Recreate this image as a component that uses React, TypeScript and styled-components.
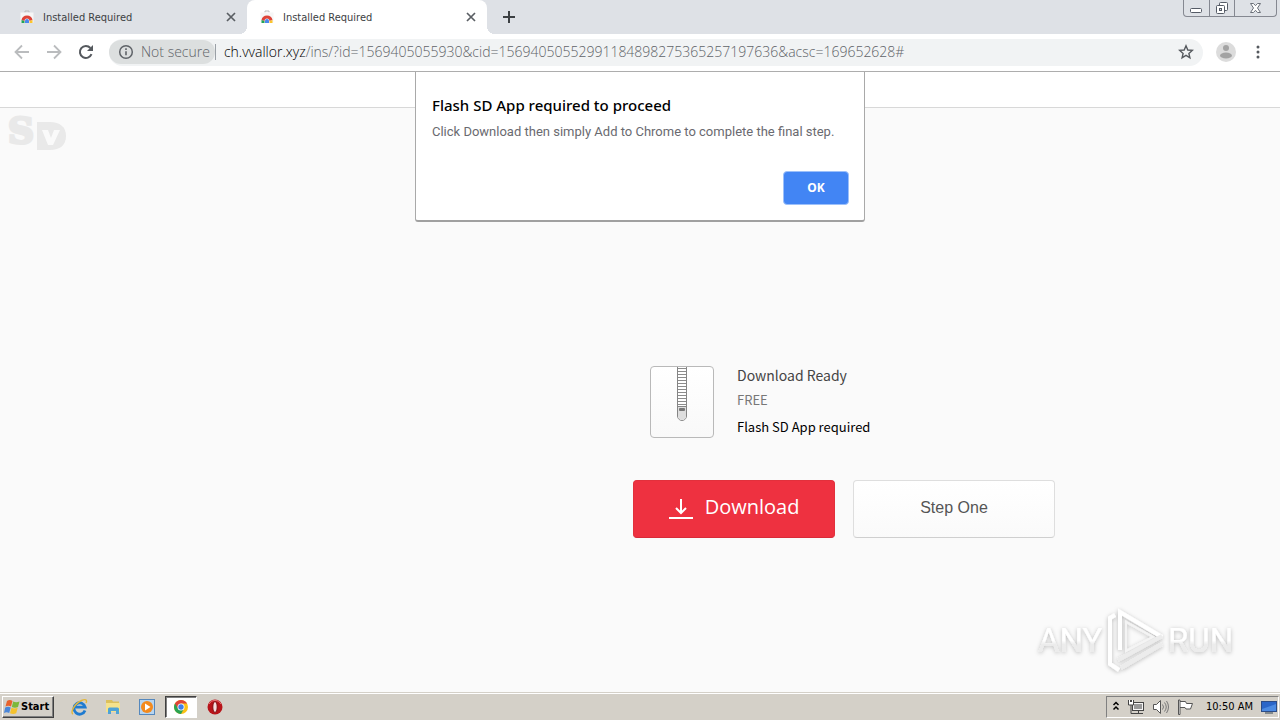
import React from "react";
import styled, { createGlobalStyle, css } from "styled-components";

const GlobalStyle = createGlobalStyle`
  *, *::before, *::after { box-sizing: border-box; }
  body {
    margin: 0;
    background: #fafafa;
    font-family: "Noto Sans", "Open Sans", sans-serif;
  }
  button, input { font: inherit; margin: 0; }
  p, h1, h2 { margin: 0; font-weight: 400; }
  svg { display: block; flex: none; }
`;

const Desktop = styled.div`
  display: flex;
  flex-direction: column;
  min-height: 100vh;
`;

const PlainButton = styled.button`
  display: flex;
  align-items: center;
  justify-content: center;
  flex: none;
  padding: 0;
  border: 0;
  background: none;
  color: #5f6368;
`;

/* ---------- tab strip ---------- */

const TabStrip = styled.header`
  display: flex;
  height: 34px;
  background: #dee1e6;
`;

const Tab = styled.div<{ $active?: boolean }>`
  position: relative;
  display: flex;
  align-items: center;
  gap: 8px;
  width: 240px;
  padding: 0 11px 0 12px;
  border-radius: 8px 8px 0 0;
  color: #3c4043;
  font: 11px/16px "DejaVu Sans Condensed", "DejaVu Sans", sans-serif;
  ${(p) =>
    p.$active &&
    css`
      background: #fff;
      &::before,
      &::after {
        content: "";
        position: absolute;
        bottom: 0;
        width: 8px;
        height: 8px;
      }
      &::before {
        right: 100%;
        background: radial-gradient(circle at 0 0, transparent 8px, #fff 8px);
      }
      &::after {
        left: 100%;
        background: radial-gradient(circle at 100% 0, transparent 8px, #fff 8px);
      }
    `}
`;

const Tabs = styled.div`
  display: flex;
  padding-left: 7px;
`;

const TabTitle = styled.span`
  flex: 1;
  padding-top: 2px;
  white-space: nowrap;
`;

const NewTab = styled(PlainButton)`
  width: 28px;
  margin-left: 8px;
  color: #3c4043;
`;

const WindowControls = styled.div`
  display: flex;
  height: 17px;
  margin: 0 3px 0 auto;
  border: 1px solid #858891;
  border-top: 0;
  border-radius: 0 0 4px 4px;
`;

const WindowButton = styled(PlainButton)<{ $wide?: boolean }>`
  width: ${(p) => (p.$wide ? 42 : 25)}px;
  & + & { border-left: 1px solid #858891; }
`;

/* ---------- toolbar ---------- */

const Toolbar = styled.div`
  display: flex;
  align-items: center;
  height: 38px;
  padding: 0 6px 1px 6px;
  background: #fff;
  border-bottom: 1px solid #adadad;
`;

const NavButton = styled(PlainButton)`
  width: 32px;
  height: 32px;
`;

const AddressBar = styled.form`
  display: flex;
  align-items: center;
  flex: 1;
  height: 27px;
  margin: 0 7px;
  padding-right: 9px;
  border-radius: 14px;
  background: #f1f3f4;
  font: 300 14px/20px "Open Sans", "Noto Sans", sans-serif;
`;

const SecurityChip = styled(PlainButton)`
  gap: 7px;
  height: 24px;
  padding: 0 5px 0 9px;
  border-radius: 12px;
  background: #dcdfdf;
`;

const UrlText = styled.div`
  flex: 1;
  margin-left: 8px;
  color: #5f6368;
  white-space: nowrap;
  overflow: hidden;
  b { color: #000; font-weight: 300; }
`;

const Separator = styled.span`
  width: 1px;
  height: 16px;
  background: #9aa0a6;
`;

/* ---------- web page ---------- */

const Page = styled.main`
  position: relative;
  flex: 1;
  display: flex;
  flex-direction: column;
  background: #fafafa;
`;

const PageHeader = styled.div`
  height: 36px;
  background: #fff;
  border-bottom: 1px solid #d8d8d8;
`;

const Brand = styled.div`
  padding: 0 6px;
`;

const Offer = styled.section`
  margin-top: 210px;
  padding: 0 16px 80px calc(50% - 7px);
`;

const Product = styled.div`
  display: flex;
  gap: 23px;
  padding-left: 17px;
`;

const ArchiveIcon = styled.div`
  display: flex;
  justify-content: center;
  width: 64px;
  height: 72px;
  border: 1px solid #b9b9b9;
  border-radius: 4px;
  background: linear-gradient(#fff, #f9f9f9);
`;

const ProductTitle = styled.h1`
  color: #444;
  font: 14px/18px "Noto Sans CJK SC", sans-serif;
`;

const ProductPrice = styled.p`
  margin-top: 6px;
  color: #777;
  font: 13px/20px "Noto Sans CJK SC", sans-serif;
`;

const ProductNote = styled.p`
  margin-top: 7px;
  color: #000;
  font: 13px/20px "Noto Sans CJK SC", sans-serif;
`;

const Actions = styled.div`
  display: flex;
  gap: 18px;
  margin-top: 42px;
`;

const ActionButton = styled.button<{ $primary?: boolean }>`
  display: flex;
  align-items: center;
  justify-content: center;
  gap: 12px;
  width: 202px;
  height: 58px;
  padding: 0 0 ${(p) => (p.$primary ? 4 : 2)}px;
  border: 1px solid ${(p) => (p.$primary ? "#e2303c" : "#dedede")};
  border-bottom-color: ${(p) => (p.$primary ? "#d82a38" : "#cfcfcf")};
  border-radius: 4px;
  background: ${(p) => (p.$primary ? "#ee3140" : "linear-gradient(#fff, #fafafa)")};
  color: ${(p) => (p.$primary ? "#fff" : "#555")};
  font: ${(p) =>
    p.$primary ? '20px/28px "Open Sans", sans-serif' : '16px/24px "Liberation Sans", sans-serif'};
`;

/* ---------- alert ---------- */

const Alert = styled.div`
  position: absolute;
  top: 0;
  left: 50%;
  transform: translateX(-50%);
  display: flex;
  flex-direction: column;
  width: 450px;
  padding: 21px 15px 15px 16px;
  border: 1px solid #a9a9a9;
  border-top: 0;
  border-bottom: 2px solid #a0a0a0;
  border-radius: 0 0 3px 3px;
  background: #fff;
`;

const AlertTitle = styled.h2`
  color: #000;
  font: 500 15px/24px "Noto Sans", sans-serif;
  white-space: nowrap;
`;

const AlertText = styled.p`
  margin-top: 5px;
  color: #6a6a70;
  font: 13px/20px Roboto, sans-serif;
  white-space: nowrap;
`;

const AlertOk = styled.button`
  align-self: flex-end;
  width: 66px;
  height: 34px;
  margin-top: 29px;
  border: 1px solid #9cc0fa;
  border-radius: 4px;
  background: #4285f4;
  color: #fff;
  font: 700 12px/16px "Noto Sans", sans-serif;
`;

const Watermark = styled.div`
  position: absolute;
  right: 44px;
  bottom: 16px;
`;

/* ---------- taskbar ---------- */

const Taskbar = styled.footer`
  display: flex;
  align-items: center;
  height: 28px;
  padding: 0 1px 0 2px;
  border-top: 1px solid #d4d0c8;
  background: #d4d0c8;
  box-shadow: inset 0 1px #fff;
`;

const StartButton = styled.button`
  display: flex;
  align-items: center;
  height: 22px;
  padding: 0 4px 0 1px;
  border: 1px solid;
  border-color: #fff #404040 #404040 #fff;
  box-shadow: inset -1px -1px #808080;
  background: #d4d0c8;
  color: #000;
  font: 700 11px/16px "DejaVu Sans Condensed", "DejaVu Sans", sans-serif;
`;

const Launcher = styled.nav`
  display: flex;
  gap: 2px;
  margin-left: 9px;
`;

const TaskButton = styled(PlainButton)<{ $pressed?: boolean }>`
  width: 32px;
  height: 22px;
  border: 1px solid transparent;
  ${(p) =>
    p.$pressed &&
    css`
      background: #fff;
      border-color: #404040 #fff #fff #404040;
      box-shadow: inset 1px 1px #808080;
    `}
`;

const Tray = styled.div`
  display: flex;
  align-items: center;
  height: 22px;
  margin-left: auto;
  padding: 0 1px 0 5px;
  border: 1px solid;
  border-color: #808080 #fff #fff #808080;
  gap: 8px;
  color: #000;
  font: 11px/16px "DejaVu Sans Condensed", "DejaVu Sans", sans-serif;
`;

const Clock = styled.time`
  margin: 0 0 0 5px;
  white-space: nowrap;
`;

/* ---------- drawings ---------- */

const StoreIcon = () => (
  <svg width="16" height="16" viewBox="0 0 16 16" aria-hidden="true">
    <path d="M6 3.500V2h4v1.500" fill="none" stroke="#bbb" />
    <path d="M1.500 3.500h13v9.500a1 1 0 0 1-1 1H2.500a1 1 0 0 1-1-1z" fill="#f6f6f6" />
    <path d="M2.500 11a5.600 5.600 0 0 1 11 0l-3 1a2.500 2.500 0 0 0-5 0z" fill="#dd4338" />
    <path d="M2.500 14V11l3 1v2z" fill="#23a455" />
    <path d="M10.500 14v-2l3-1V14z" fill="#fbc52d" />
    <path d="M6 14v-2a2 2 0 0 1 4 0v2z" fill="#4a87ee" />
  </svg>
);

const CloseIcon = () => (
  <svg width="10" height="10" viewBox="0 0 10 10" aria-hidden="true">
    <path d="M1 1l8 8M9 1L1 9" stroke="#5a5e63" strokeWidth="1.700" />
  </svg>
);

const ArrowIcon = ({ forward }: { forward?: boolean }) => (
  <svg width="16" height="16" viewBox="0 0 16 16" aria-hidden="true">
    <path
      d={forward ? "M1 8h13M8 1.500L14.500 8L8 14.500" : "M15 8h-13M8 1.500L1.500 8L8 14.500"}
      fill="none"
      stroke="#babcbe"
      strokeWidth="1.800"
    />
  </svg>
);

const ReloadIcon = () => (
  <svg width="16" height="16" viewBox="0 0 16 16" aria-hidden="true">
    <path d="M13.500 10.200A6 6 0 1 1 12.400 4" fill="none" stroke="#55595e" strokeWidth="2" />
    <path d="M15 1v6H9z" fill="#55595e" />
  </svg>
);

const InfoIcon = () => (
  <svg width="16" height="16" viewBox="0 0 16 16" aria-hidden="true">
    <circle cx="8" cy="8" r="6.300" fill="none" stroke="#5f6368" strokeWidth="1.500" />
    <path d="M8 7.200v4M8 4.300v1.600" stroke="#5f6368" strokeWidth="1.600" />
  </svg>
);

const StarIcon = () => (
  <svg width="16" height="16" viewBox="0 0 16 16" aria-hidden="true">
    <path
      d="M8 1.800l1.800 4.200 4.500.4-3.400 3 1 4.400L8 11.400l-3.900 2.400 1-4.400-3.400-3 4.500-.4z"
      fill="none"
      stroke="#55595e"
      strokeWidth="1.400"
    />
  </svg>
);

const AvatarIcon = () => (
  <svg width="20" height="20" viewBox="0 0 20 20" aria-hidden="true">
    <circle cx="10" cy="10" r="10" fill="#dcdcdc" />
    <circle cx="10" cy="6" r="3" fill="#a3a3a3" />
    <ellipse cx="10" cy="13.500" rx="6" ry="3" fill="#a3a3a3" />
  </svg>
);

const MenuIcon = () => (
  <svg width="4" height="16" viewBox="0 0 4 16" aria-hidden="true">
    {[3, 8, 13].map((y) => (
      <circle key={y} cx="2" cy={y} r="1.500" fill="#55595e" />
    ))}
  </svg>
);

const BrandLogo = () => (
  <svg width="62" height="48" viewBox="0 0 62 48" role="img" aria-label="SD">
    <text
      x="2"
      y="35"
      fill="#e9e9e9"
      stroke="#e9e9e9"
      strokeWidth="3"
      fontFamily="DejaVu Serif"
      fontWeight="700"
      fontSize="36"
    >
      S
    </text>
    <path d="M31 14h13c10 0 16 5 16 14s-6 14-16 14H31z" fill="#e9e9e9" />
    <path d="M36 22h6l3 8 3-8h6l-7 15h-5z" fill="#fafafa" />
  </svg>
);

const Zipper = () => (
  <svg width="12" height="56" viewBox="0 0 12 56" aria-hidden="true">
    <path d="M1.500 0v49a4.500 4.500 0 0 0 9 0V0" fill="#fff" stroke="#858585" />
    {Array.from({ length: 13 }, (_, i) => (
      <path key={i} d={`M2 ${i * 3 + 1.5}h8`} stroke="#8c8c8c" />
    ))}
    <path d="M2 39h8v10a4 4 0 0 1-8 0z" fill="#dedede" />
    <path d="M2 39.500h8" stroke="#858585" />
    <rect x="3" y="41" width="6" height="3" rx="1" fill="#777" />
  </svg>
);

const DownloadIcon = () => (
  <svg width="24" height="24" viewBox="0 0 24 24" aria-hidden="true">
    <path d="M12 4v14M7 13l5 5 5-5M0 23h24" fill="none" stroke="#fff" strokeWidth="2" />
  </svg>
);

const WatermarkLogo = () => (
  <svg width="202" height="70" viewBox="0 0 202 70" role="img" aria-label="ANY RUN">
    <defs>
      <linearGradient id="wm" x1="0" y1="0" x2="0" y2="1">
        <stop offset="0.500" stopColor="#fff" />
        <stop offset="0.600" stopColor="#ececec" />
      </linearGradient>
      <filter id="wmShadow" x="-10%" y="-10%" width="120%" height="120%">
        <feDropShadow dx="0" dy="1" stdDeviation="2" floodColor="#000" floodOpacity="0.280" />
      </filter>
    </defs>
    <g filter="url(#wmShadow)" fill="url(#wm)" fontFamily="Roboto, sans-serif" fontSize="33">
      <text x="4" y="46">ANY</text>
      <text x="134" y="46">RUN</text>
      <g fill="none" stroke="#fff" strokeWidth="4">
        <path d="M81 9l-5 3v46l9 6" />
        <path d="M86 44V6l42 25" />
        <path d="M84 54l44-24M87 62l41-24" stroke="#ececec" />
        <path d="M92 16v29l27-14z" stroke="#f4f4f4" strokeWidth="2" />
      </g>
    </g>
  </svg>
);

const WindowsFlag = () => (
  <svg width="17" height="16" viewBox="0 0 17 16" aria-hidden="true">
    <path d="M3 2c2-1.500 4-1 5.500 0L7 7.500C5.500 6.500 3.500 6.300 1.500 7.500z" fill="#e8622c" />
    <path d="M9.200 2.400c2 1 4 1 6.300 0L14 8c-2 1-4 1-6.200 0z" fill="#7cb83a" />
    <path d="M1.200 8.500c2-1.200 4-1 5.500 0L5.200 14c-1.500-1-3.500-1.200-5.200 0z" fill="#4a86d8" />
    <path d="M7.500 8.800c2 1 4 1 6.200 0l-1.500 5.500c-2 1-4 1-6.200 0z" fill="#f5c22c" />
  </svg>
);

const ExplorerIcon = () => (
  <svg width="18" height="18" viewBox="0 0 18 18" aria-hidden="true">
    <path d="M15 12.500A5.700 5.700 0 1 1 15.200 9.200H5.500" fill="none" stroke="#1f7bd0" strokeWidth="2.800" />
    <path d="M3 16C0 15 4 6 11.500 2.500c4-1.800 6-.6 4.500 2.500" fill="none" stroke="#e3b63a" strokeWidth="1.400" />
  </svg>
);

const FolderIcon = () => (
  <svg width="18" height="18" viewBox="0 0 18 18" aria-hidden="true">
    <path d="M2 2h6l1 1.500h6V14H2z" fill="#dcc05c" />
    <path d="M2 5h14v9H2z" fill="#f5e28c" />
    <path d="M4 16v-5q0-1.500 1.500-1.500h8q1.500 0 1.500 1.500v5h-3v-3H7v3z" fill="#4fa3d6" />
  </svg>
);

const PlayerIcon = () => (
  <svg width="18" height="18" viewBox="0 0 18 18" aria-hidden="true">
    <rect x="1.500" y="1.500" width="15" height="15" fill="#b7d5f0" stroke="#5588bd" />
    <circle cx="9" cy="9" r="6" fill="#f38a1d" />
    <path d="M7 5.500v7L12.500 9z" fill="#fff" />
  </svg>
);

const ChromeIcon = () => (
  <svg width="16" height="16" viewBox="0 0 16 16" aria-hidden="true">
    <circle cx="8" cy="8" r="7" fill="#fbc116" />
    <path d="M8 8L1.940 4.500A7 7 0 0 0 8 15l2.500-4.500z" fill="#2aa352" />
    <path d="M1.940 4.500a7 7 0 0 1 12.120 0H8L5 9.500z" fill="#df4437" />
    <circle cx="8" cy="8" r="3.500" fill="#fff" />
    <circle cx="8" cy="8" r="2.700" fill="#3f7fe8" />
  </svg>
);

const OperaIcon = () => (
  <svg width="16" height="16" viewBox="0 0 16 16" aria-hidden="true">
    <circle cx="8" cy="8" r="7.500" fill="#b8141a" />
    <path d="M2 5a6.700 6.700 0 0 1 12 0" fill="none" stroke="#e8787a" />
    <ellipse cx="8" cy="8" rx="2.200" ry="5.500" fill="#f6dede" stroke="#7f0c10" />
  </svg>
);

const ChevronsIcon = () => (
  <svg width="8" height="12" viewBox="0 0 8 12" aria-hidden="true">
    <path d="M1.500 4L4 1.500 6.500 4M1.500 8.500L4 6l2.500 2.500" fill="none" stroke="#000" strokeWidth="1.500" />
  </svg>
);

const NetworkIcon = () => (
  <svg width="16" height="16" viewBox="0 0 16 16" aria-hidden="true">
    <rect x="4.500" y="3.500" width="11" height="8" fill="#999" stroke="#444" />
    <rect x="5.500" y="4.500" width="9" height="6" fill="none" stroke="#f4f4f4" />
    <path d="M6 14.500h9M10.500 12v2" stroke="#444" />
    <path d="M3 6v8.500h4" fill="none" stroke="#444" />
    <path d="M0.500 1v5h5V1M2.500 1v2M3.500 1v2" fill="#fff" stroke="#444" />
  </svg>
);

const SpeakerIcon = () => (
  <svg width="17" height="16" viewBox="0 0 17 16" aria-hidden="true">
    <path d="M1.500 5.500h3l4-4v13l-4-4h-3z" fill="#fff" stroke="#555" />
    <path d="M10.500 5.500q2 2.500 0 5M12.500 3.500q3.500 4.500 0 9M14.500 2q4 6 0 12" fill="none" stroke="#777" />
  </svg>
);

const FlagIcon = () => (
  <svg width="16" height="16" viewBox="0 0 16 16" aria-hidden="true">
    <path d="M2.500 2.500h6l1 2h6l-2 5.500h-4.500l-1-1.500h-5.500" fill="#fff" stroke="#555" />
    <path d="M1.500 1v14.500h1.500V1z" fill="#fff" stroke="#555" />
  </svg>
);

const DesktopIcon = () => (
  <svg width="16" height="14" viewBox="0 0 16 14" aria-hidden="true">
    <rect x="0.500" y="1.500" width="15" height="10" fill="#2b66c8" stroke="#2c4c86" />
    <path d="M1 9L15 4v7H1z" fill="#4c8be2" />
    <path d="M4 13h8" stroke="#345" />
  </svg>
);

const MinimizeGlyph = () => (
  <svg width="13" height="14" viewBox="0 0 13 14" aria-hidden="true">
    <rect x="0.500" y="7.500" width="11" height="4" rx="1" fill="#fff" stroke="#555b66" />
  </svg>
);

const RestoreGlyph = () => (
  <svg width="14" height="14" viewBox="0 0 14 14" aria-hidden="true">
    <rect x="4.500" y="1.500" width="8" height="8" rx="1" fill="#fff" stroke="#555b66" />
    <rect x="1.500" y="4.500" width="8" height="8" rx="1" fill="#fff" stroke="#555b66" />
    <rect x="4.500" y="7.500" width="2" height="2" fill="#dee1e6" stroke="#555b66" />
  </svg>
);

const CloseGlyph = () => (
  <svg width="13" height="12" viewBox="0 0 13 12" aria-hidden="true">
    <path
      d="M1.500 1.500h3l2 2.200 2-2.200h3L8.500 6l3 4.500h-3l-2-2.200-2 2.200h-3L4.500 6z"
      fill="#fff"
      stroke="#6b7079"
    />
  </svg>
);

const tabs = [
  { title: "Installed Required", active: false },
  { title: "Installed Required", active: true },
];

const launchers = [
  { label: "Internet Explorer", Icon: ExplorerIcon },
  { label: "Windows Explorer", Icon: FolderIcon },
  { label: "Media Player", Icon: PlayerIcon },
  { label: "Google Chrome", Icon: ChromeIcon, pressed: true },
  { label: "Opera", Icon: OperaIcon },
];

export default function App() {
  return (
    <Desktop>
      <GlobalStyle />
      <TabStrip>
        <Tabs>
          {tabs.map((tab, i) => (
            <Tab key={i} $active={tab.active}>
              <StoreIcon />
              <TabTitle>{tab.title}</TabTitle>
              <PlainButton aria-label="Close tab">
                <CloseIcon />
              </PlainButton>
            </Tab>
          ))}
        </Tabs>
        <NewTab aria-label="New tab">
          <svg width="12" height="12" viewBox="0 0 12 12" aria-hidden="true">
            <path d="M6 0v12M0 6h12" stroke="#3c4043" strokeWidth="2" />
          </svg>
        </NewTab>
        <WindowControls>
          <WindowButton aria-label="Minimize"><MinimizeGlyph /></WindowButton>
          <WindowButton aria-label="Restore"><RestoreGlyph /></WindowButton>
          <WindowButton aria-label="Close" $wide><CloseGlyph /></WindowButton>
        </WindowControls>
      </TabStrip>

      <Toolbar>
        <NavButton aria-label="Back"><ArrowIcon /></NavButton>
        <NavButton aria-label="Forward"><ArrowIcon forward /></NavButton>
        <NavButton aria-label="Reload"><ReloadIcon /></NavButton>
        <AddressBar onSubmit={(e) => e.preventDefault()}>
          <SecurityChip type="button">
            <InfoIcon />
            Not secure
          </SecurityChip>
          <Separator />
          <UrlText>
            <b>ch.vvallor.xyz</b>
            /ins/?id=1569405055930&amp;cid=15694050552991184898275365257197636&amp;acsc=169652628#
          </UrlText>
          <PlainButton type="button" aria-label="Bookmark this page"><StarIcon /></PlainButton>
        </AddressBar>
        <NavButton aria-label="Profile"><AvatarIcon /></NavButton>
        <NavButton aria-label="Menu"><MenuIcon /></NavButton>
      </Toolbar>

      <Page>
        <PageHeader />
        <Brand><BrandLogo /></Brand>
        <Offer>
          <Product>
            <ArchiveIcon><Zipper /></ArchiveIcon>
            <div>
              <ProductTitle>Download Ready</ProductTitle>
              <ProductPrice>FREE</ProductPrice>
              <ProductNote>Flash SD App required</ProductNote>
            </div>
          </Product>
          <Actions>
            <ActionButton $primary>
              <DownloadIcon />
              Download
            </ActionButton>
            <ActionButton>Step One</ActionButton>
          </Actions>
        </Offer>
        <Watermark><WatermarkLogo /></Watermark>
        <Alert role="alertdialog" aria-labelledby="alert-title" aria-describedby="alert-text">
          <AlertTitle id="alert-title">Flash SD App required to proceed</AlertTitle>
          <AlertText id="alert-text">
            Click Download then simply Add to Chrome to complete the final step.
          </AlertText>
          <AlertOk>OK</AlertOk>
        </Alert>
      </Page>

      <Taskbar>
        <StartButton>
          <WindowsFlag />
          Start
        </StartButton>
        <Launcher>
          {launchers.map(({ label, Icon, pressed }) => (
            <TaskButton key={label} aria-label={label} $pressed={pressed}>
              <Icon />
            </TaskButton>
          ))}
        </Launcher>
        <Tray>
          <ChevronsIcon />
          <NetworkIcon />
          <SpeakerIcon />
          <FlagIcon />
          <Clock>10:50 AM</Clock>
          <DesktopIcon />
        </Tray>
      </Taskbar>
    </Desktop>
  );
}
